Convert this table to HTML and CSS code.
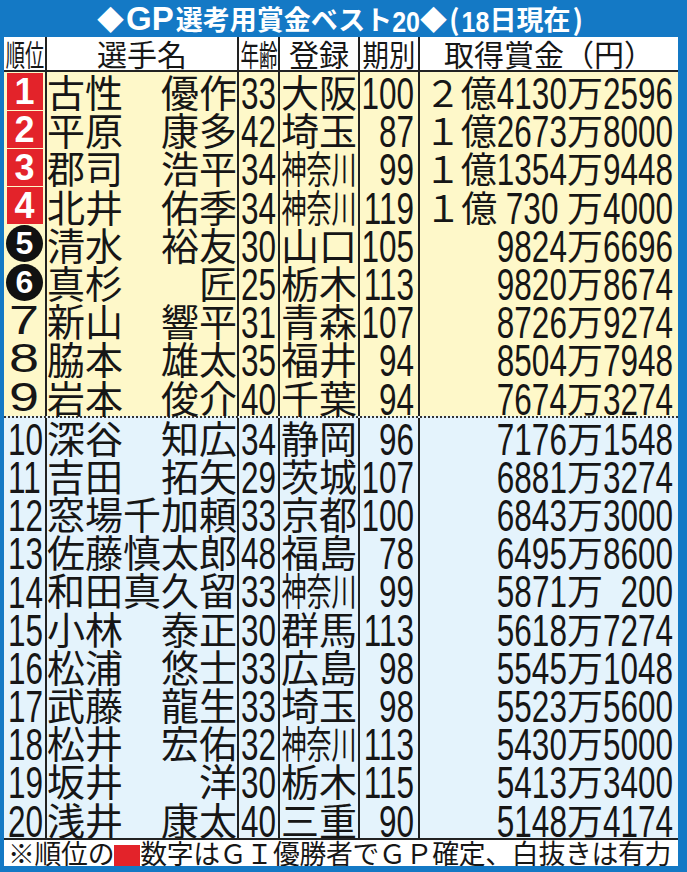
FILE: index.html
```html
<!DOCTYPE html>
<html lang="ja">
<head>
<meta charset="utf-8">
<title>GP選考用賞金ベスト20</title>
<link rel="stylesheet" href="styles.css">
</head>
<body>
<div class="frame">
  <div class="title">◆<span class="tg">GP</span>選考用賞金ベスト<span class="tn">20</span>◆<span class="tp">(</span><span class="tn">18</span>日現在<span class="tp">)</span></div>
  <div class="table">
    <div class="row head">
      <div class="c hc"><span class="sq sq-rank">順位</span></div>
      <div class="c hc">選手名</div>
      <div class="c hc"><span class="sq sq-age">年齢</span></div>
      <div class="c hc">登録</div>
      <div class="c hc"><span class="sq sq-per">期別</span></div>
      <div class="c hc">取得賞金（円）</div>
    </div>

    <div class="row item y">
      <div class="c rank"><span class="badge">1</span></div>
      <div class="c name"><span>古性</span><span>優作</span></div>
      <div class="c age"><span class="d">33</span></div>
      <div class="c reg">大阪</div>
      <div class="c per"><span class="d">100</span></div>
      <div class="c money"><span class="k">２億</span><span class="d">4130</span><span class="k">万</span><span class="d">2596</span></div>
    </div>
    <div class="row item y">
      <div class="c rank"><span class="badge">2</span></div>
      <div class="c name"><span>平原</span><span>康多</span></div>
      <div class="c age"><span class="d">42</span></div>
      <div class="c reg">埼玉</div>
      <div class="c per"><span class="d">87</span></div>
      <div class="c money"><span class="k">１億</span><span class="d">2673</span><span class="k">万</span><span class="d">8000</span></div>
    </div>
    <div class="row item y">
      <div class="c rank"><span class="badge">3</span></div>
      <div class="c name"><span>郡司</span><span>浩平</span></div>
      <div class="c age"><span class="d">34</span></div>
      <div class="c reg"><span class="sq sq-pref">神奈川</span></div>
      <div class="c per"><span class="d">99</span></div>
      <div class="c money"><span class="k">１億</span><span class="d">1354</span><span class="k">万</span><span class="d">9448</span></div>
    </div>
    <div class="row item y">
      <div class="c rank"><span class="badge">4</span></div>
      <div class="c name"><span>北井</span><span>佑季</span></div>
      <div class="c age"><span class="d">34</span></div>
      <div class="c reg"><span class="sq sq-pref">神奈川</span></div>
      <div class="c per"><span class="d">119</span></div>
      <div class="c money"><span class="k">１億</span><span class="gap"></span><span class="d">730</span><span class="gap"></span><span class="k">万</span><span class="d">4000</span></div>
    </div>
    <div class="row item y">
      <div class="c rank"><span class="circle">5</span></div>
      <div class="c name"><span>清水</span><span>裕友</span></div>
      <div class="c age"><span class="d">30</span></div>
      <div class="c reg">山口</div>
      <div class="c per"><span class="d">105</span></div>
      <div class="c money"><span class="d">9824</span><span class="k">万</span><span class="d">6696</span></div>
    </div>
    <div class="row item y">
      <div class="c rank"><span class="circle">6</span></div>
      <div class="c name"><span>真杉</span><span>匠</span></div>
      <div class="c age"><span class="d">25</span></div>
      <div class="c reg">栃木</div>
      <div class="c per"><span class="d">113</span></div>
      <div class="c money"><span class="d">9820</span><span class="k">万</span><span class="d">8674</span></div>
    </div>
    <div class="row item y">
      <div class="c rank"><span class="big">7</span></div>
      <div class="c name"><span>新山</span><span>響平</span></div>
      <div class="c age"><span class="d">31</span></div>
      <div class="c reg">青森</div>
      <div class="c per"><span class="d">107</span></div>
      <div class="c money"><span class="d">8726</span><span class="k">万</span><span class="d">9274</span></div>
    </div>
    <div class="row item y">
      <div class="c rank"><span class="big">8</span></div>
      <div class="c name"><span>脇本</span><span>雄太</span></div>
      <div class="c age"><span class="d">35</span></div>
      <div class="c reg">福井</div>
      <div class="c per"><span class="d">94</span></div>
      <div class="c money"><span class="d">8504</span><span class="k">万</span><span class="d">7948</span></div>
    </div>
    <div class="row item y">
      <div class="c rank"><span class="big">9</span></div>
      <div class="c name"><span>岩本</span><span>俊介</span></div>
      <div class="c age"><span class="d">40</span></div>
      <div class="c reg">千葉</div>
      <div class="c per"><span class="d">94</span></div>
      <div class="c money"><span class="d">7674</span><span class="k">万</span><span class="d">3274</span></div>
    </div>

    <div class="row item b sep">
      <div class="c rank rn"><span class="d">10</span></div>
      <div class="c name"><span>深谷</span><span>知広</span></div>
      <div class="c age"><span class="d">34</span></div>
      <div class="c reg">静岡</div>
      <div class="c per"><span class="d">96</span></div>
      <div class="c money"><span class="d">7176</span><span class="k">万</span><span class="d">1548</span></div>
    </div>
    <div class="row item b">
      <div class="c rank rn"><span class="d">11</span></div>
      <div class="c name"><span>吉田</span><span>拓矢</span></div>
      <div class="c age"><span class="d">29</span></div>
      <div class="c reg">茨城</div>
      <div class="c per"><span class="d">107</span></div>
      <div class="c money"><span class="d">6881</span><span class="k">万</span><span class="d">3274</span></div>
    </div>
    <div class="row item b">
      <div class="c rank rn"><span class="d">12</span></div>
      <div class="c name"><span>窓場千加頼</span></div>
      <div class="c age"><span class="d">33</span></div>
      <div class="c reg">京都</div>
      <div class="c per"><span class="d">100</span></div>
      <div class="c money"><span class="d">6843</span><span class="k">万</span><span class="d">3000</span></div>
    </div>
    <div class="row item b">
      <div class="c rank rn"><span class="d">13</span></div>
      <div class="c name"><span>佐藤慎太郎</span></div>
      <div class="c age"><span class="d">48</span></div>
      <div class="c reg">福島</div>
      <div class="c per"><span class="d">78</span></div>
      <div class="c money"><span class="d">6495</span><span class="k">万</span><span class="d">8600</span></div>
    </div>
    <div class="row item b">
      <div class="c rank rn"><span class="d">14</span></div>
      <div class="c name"><span>和田真久留</span></div>
      <div class="c age"><span class="d">33</span></div>
      <div class="c reg"><span class="sq sq-pref">神奈川</span></div>
      <div class="c per"><span class="d">99</span></div>
      <div class="c money"><span class="d">5871</span><span class="k">万</span><span class="gap2"></span><span class="d">200</span></div>
    </div>
    <div class="row item b">
      <div class="c rank rn"><span class="d">15</span></div>
      <div class="c name"><span>小林</span><span>泰正</span></div>
      <div class="c age"><span class="d">30</span></div>
      <div class="c reg">群馬</div>
      <div class="c per"><span class="d">113</span></div>
      <div class="c money"><span class="d">5618</span><span class="k">万</span><span class="d">7274</span></div>
    </div>
    <div class="row item b">
      <div class="c rank rn"><span class="d">16</span></div>
      <div class="c name"><span>松浦</span><span>悠士</span></div>
      <div class="c age"><span class="d">33</span></div>
      <div class="c reg">広島</div>
      <div class="c per"><span class="d">98</span></div>
      <div class="c money"><span class="d">5545</span><span class="k">万</span><span class="d">1048</span></div>
    </div>
    <div class="row item b">
      <div class="c rank rn"><span class="d">17</span></div>
      <div class="c name"><span>武藤</span><span>龍生</span></div>
      <div class="c age"><span class="d">33</span></div>
      <div class="c reg">埼玉</div>
      <div class="c per"><span class="d">98</span></div>
      <div class="c money"><span class="d">5523</span><span class="k">万</span><span class="d">5600</span></div>
    </div>
    <div class="row item b">
      <div class="c rank rn"><span class="d">18</span></div>
      <div class="c name"><span>松井</span><span>宏佑</span></div>
      <div class="c age"><span class="d">32</span></div>
      <div class="c reg"><span class="sq sq-pref">神奈川</span></div>
      <div class="c per"><span class="d">113</span></div>
      <div class="c money"><span class="d">5430</span><span class="k">万</span><span class="d">5000</span></div>
    </div>
    <div class="row item b">
      <div class="c rank rn"><span class="d">19</span></div>
      <div class="c name"><span>坂井</span><span>洋</span></div>
      <div class="c age"><span class="d">30</span></div>
      <div class="c reg">栃木</div>
      <div class="c per"><span class="d">115</span></div>
      <div class="c money"><span class="d">5413</span><span class="k">万</span><span class="d">3400</span></div>
    </div>
    <div class="row item b">
      <div class="c rank rn"><span class="d">20</span></div>
      <div class="c name"><span>浅井</span><span>康太</span></div>
      <div class="c age"><span class="d">40</span></div>
      <div class="c reg">三重</div>
      <div class="c per"><span class="d">90</span></div>
      <div class="c money"><span class="d">5148</span><span class="k">万</span><span class="d">4174</span></div>
    </div>
  </div>
  <div class="note">※順位の<span class="redbox"></span>数字はＧＩ優勝者でＧＰ確定、白抜きは有力</div>
</div>
</body>
</html>
```

FILE: styles.css
```css
* { box-sizing: border-box; }
html, body { margin: 0; padding: 0; }
body {
  width: 687px;
  height: 872px;
  overflow: hidden;
  background: #1479c5;
  font-family: "Noto Sans CJK JP", "Noto Sans", sans-serif;
  color: #161616;
}
.frame {
  width: 687px;
  height: 872px;
  background: #1479c5;
  padding: 0 9px 6px 4px;
  display: flex;
  flex-direction: column;
}
.title {
  height: 37px;
  flex: none;
  color: #fff;
  font-size: 27px;
  font-weight: 700;
  line-height: 37px;
  text-align: center;
  white-space: nowrap;
  overflow: hidden;
}
.title .tg {
  font-family: "Liberation Sans", sans-serif;
  font-weight: 700;
  font-size: 33px;
  margin: 0 2px;
}
.title .tn {
  display: inline-block;
  font-family: "Liberation Sans", sans-serif;
  font-weight: 700;
  font-size: 25px;
  transform: scaleY(1.2);
}
.title .tp { font-size: 28px; margin: 0 2px; }
.table { flex: none; }
.row {
  display: grid;
  grid-template-columns: 43px 192px 41px 80px 60px 258px;
}
.c {
  border-right: 2px solid #222;
  white-space: nowrap;
  overflow: visible;
}
.c:last-child { border-right: 0; }

.head {
  background: #fff;
  height: 35px;
  border-bottom: 2px solid #222;
}
.hc {
  display: flex;
  justify-content: center;
  align-items: center;
  font-size: 30px;
  line-height: 33px;
}
.sq { display: inline-block; flex: none; }
.sq-rank { transform: scaleX(0.64); }
.sq-age { transform: scaleX(0.62); }
.sq-per { transform: scaleX(0.88); }
.sq-pref { transform: scaleX(0.66); }

.item { height: 38.2px; line-height: 38px; }
.item.sep { height: 40.2px; border-top: 2px dotted #333; }
.y { background: #fef8c9; }
.b { background: #e4f3fc; }

.rank {
  display: flex;
  align-items: center;
  justify-content: center;
}
.rank.rn { justify-content: flex-start; padding-left: 4px; }
.badge {
  width: 36px;
  height: 37px;
  background: #e3232a;
  color: #fff;
  font-family: "Liberation Sans", sans-serif;
  font-weight: 700;
  font-size: 36px;
  line-height: 37px;
  text-align: center;
}
.circle {
  width: 37px;
  height: 37px;
  border-radius: 50%;
  background: #111;
  color: #fff;
  font-family: "Liberation Sans", sans-serif;
  font-weight: 700;
  font-size: 32px;
  line-height: 37px;
  text-align: center;
}
.big {
  display: inline-block;
  font-family: "Liberation Sans", sans-serif;
  font-size: 40px;
  line-height: 38px;
  transform: scaleX(1.35);
}
.name {
  display: flex;
  justify-content: space-between;
  font-size: 38px;
  line-height: 38px;
  letter-spacing: 0;
}
.d {
  display: inline-block;
  vertical-align: top;
  font-family: "Liberation Sans", sans-serif;
  font-size: 31.5px;
  line-height: 38px;
  transform: translateY(2.5px) scaleY(1.38);
}
.age { text-align: center; }
.reg {
  display: flex;
  justify-content: center;
  font-size: 38px;
  line-height: 38px;
}
.per { text-align: right; padding-right: 4px; }
.money { text-align: right; padding-right: 5px; }
.k { font-size: 36px; vertical-align: top; }
.gap { display: inline-block; vertical-align: top; width: 8.5px; height: 1px; }
.gap2 { display: inline-block; vertical-align: top; width: 17.5px; height: 1px; }

.note {
  flex: none;
  height: 28px;
  background: #fff;
  border-top: 2px solid #222;
  font-size: 26.8px;
  letter-spacing: -0.25px;
  line-height: 26px;
  padding-left: 4px;
  white-space: nowrap;
  overflow: hidden;
}
.redbox {
  display: inline-block;
  width: 26px;
  height: 21px;
  background: #e3232a;
  vertical-align: -2px;
}
```
